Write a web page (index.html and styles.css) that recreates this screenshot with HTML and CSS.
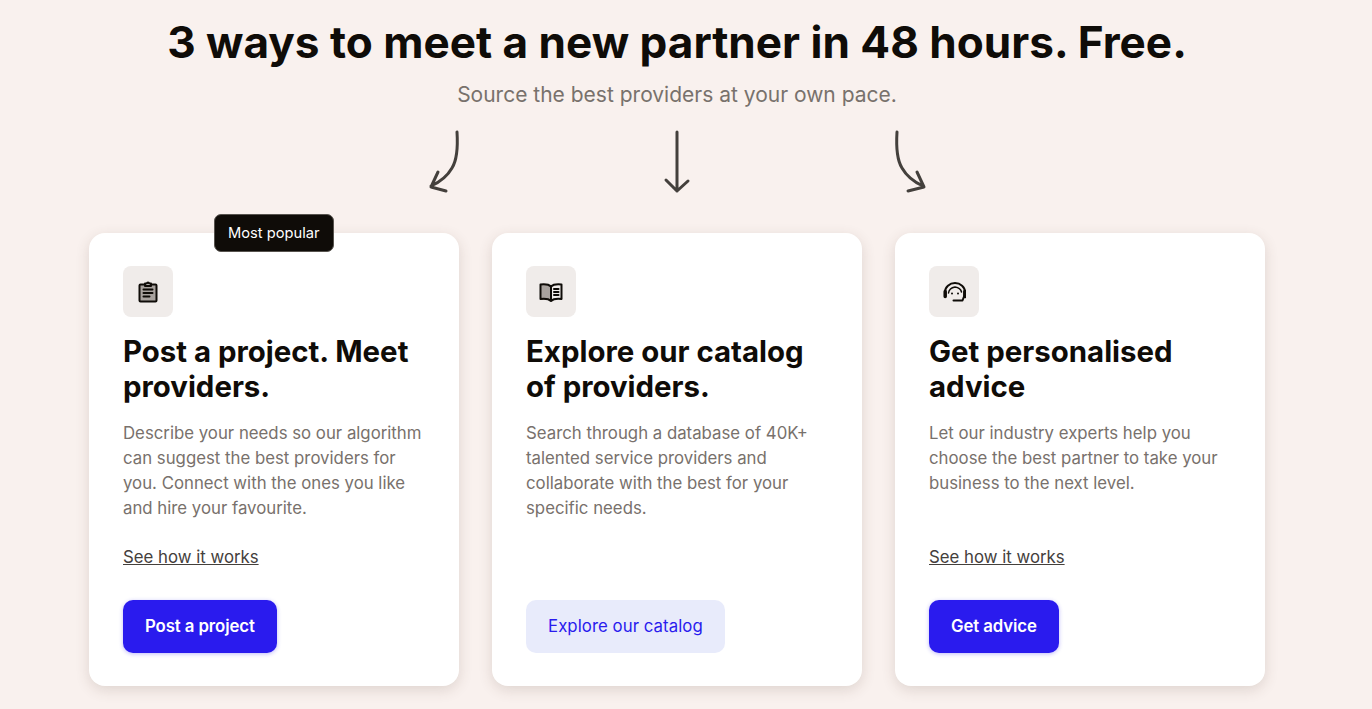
FILE: index.html
```html
<!DOCTYPE html>
<html lang="en">
<head>
    <meta charset="UTF-8">
    <title>3 ways to meet a new partner</title>
    <link rel="stylesheet" href="styles.css">
</head>
<body>
    <header class="intro">
        <h1>3 ways to meet a new partner in 48 hours. Free.</h1>
        <p>Source the best providers at your own pace.</p>
    </header>
    <div class="arrows">
        <svg class="arrow" width="40" height="68" viewBox="0 0 40 68">
            <path d="M32 4C33 20 32 32 27 40C23 47 15 54 6 58M13 44L6 59L21 63"/>
        </svg>
        <svg class="arrow" width="30" height="68" viewBox="0 0 30 68">
            <path d="M15 4V63M4 52L15 63L26 53"/>
        </svg>
        <svg class="arrow" width="40" height="68" viewBox="0 0 40 68">
            <path d="M8 4C7 20 8 32 13 40C17 47 25 54 34 58M28 44L35 59L19 63"/>
        </svg>
    </div>
    <div class="cards">
        <div class="card">
            <span class="badge">Most popular</span>
            <div class="icon">
                <svg width="24" height="24" viewBox="0 0 24 24">
                    <path class="fill" d="M4 5h16v16H4z"/>
                    <path d="M9 4.500H4.500a1 1 0 0 0-1 1v15a1 1 0 0 0 1 1h15a1 1 0 0 0 1-1v-15a1 1 0 0 0-1-1H15M9 3.500h2a1 1 0 0 1 2 0h2v2.500H9zM7.500 9.500h9M7.500 13h9M7.500 16.500h6"/>
                </svg>
            </div>
            <h2>Post a project. Meet providers.</h2>
            <p>Describe your needs so our algorithm can suggest the best providers for you. Connect with the ones you like and hire your favourite.</p>
            <a class="link" href="#">See how it works</a>
            <a class="btn" href="#">Post a project</a>
        </div>
        <div class="card">
            <div class="icon">
                <svg width="24" height="24" viewBox="0 0 24 24">
                    <path class="fill" d="M2 5h10v15H2z"/>
                    <path d="M12 6.500C10 4.500 6 4 1.500 4.500V19c4.500-.5 8.500 0 10.500 2 2-2 6-2.500 10.500-2V4.500C18 4 14 4.500 12 6.500zM12 6.500v14M15 9h4.500M15 12h4.500M15 15h4.500"/>
                </svg>
            </div>
            <h2>Explore our catalog of providers.</h2>
            <p>Search through a database of 40K+ talented service providers and collaborate with the best for your specific needs.</p>
            <a class="btn btn-light" href="#">Explore our catalog</a>
        </div>
        <div class="card">
            <div class="icon">
                <svg width="24" height="24" viewBox="0 0 24 24">
                    <path d="M3 13v-1a10 9 0 0 1 20 0v1"/>
                    <path class="thin" d="M6.500 13C7 9.500 10 7.500 13 7c3 .5 6 2.500 6.500 5"/>
                    <path class="thick" d="M3.200 11.500v5M22.800 11.500v5"/>
                    <path d="M22 16.500l-1.500 4h-9"/>
                    <path d="M10 13.500h.01M16 13.500h.01"/>
                </svg>
            </div>
            <h2>Get personalised advice</h2>
            <p>Let our industry experts help you choose the best partner to take your business to the next level.</p>
            <a class="link" href="#">See how it works</a>
            <a class="btn" href="#">Get advice</a>
        </div>
    </div>
</body>
</html>
```

FILE: styles.css
```css
body {
    font-family: Inter, "Liberation Sans", sans-serif;
    background-color: #f9f1ee;
    color: #0f0c08;
    margin: 0;
    padding: 0 18px 23px 0;
    display: flex;
    flex-direction: column;
    align-items: center;
}
.intro {
    text-align: center;
    padding-top: 14px;
}
h1 {
    font-size: 44.1px;
    line-height: 56px;
    font-weight: 700;
    margin: 0;
}
.intro p {
    font-size: 21px;
    line-height: 30px;
    color: #78716c;
    margin: 10px 0 0;
}
.arrows {
    display: flex;
    justify-content: center;
    gap: 197px;
    margin-top: 18px;
    height: 68px;
}
.arrow {
    fill: none;
    stroke: #44403c;
    stroke-width: 3;
    stroke-linecap: round;
    stroke-linejoin: round;
}
.cards {
    display: flex;
    gap: 33px;
    margin-top: 37px;
}
.card {
    position: relative;
    width: 370px;
    height: 453px;
    box-sizing: border-box;
    background-color: #fff;
    border-radius: 16px;
    padding: 33px 34px;
    box-shadow: 0 4px 14px rgba(90, 60, 50, 0.16);
    display: flex;
    flex-direction: column;
    align-items: flex-start;
}
.badge {
    position: absolute;
    top: -19px;
    left: 125px;
    background-color: #0f0c08;
    color: #fff;
    border: 1px solid #57534e;
    border-radius: 7px;
    font-size: 14.7px;
    line-height: 20px;
    padding: 8px 13px;
}
.icon {
    width: 50px;
    height: 51px;
    background-color: #f0ecea;
    border-radius: 8px;
    display: flex;
    align-items: center;
    justify-content: center;
}
.icon svg {
    fill: none;
    stroke: #0f0c08;
    stroke-width: 2;
    stroke-linecap: round;
    stroke-linejoin: round;
}
.icon .fill {
    fill: #a8a29e;
    stroke: none;
}
.icon .thin {
    stroke-width: 1.5;
}
.icon .thick {
    stroke-width: 3.5;
}
h2 {
    font-size: 29.4px;
    line-height: 35px;
    font-weight: 700;
    margin: 17px 0 0;
}
.card p {
    font-size: 16.8px;
    line-height: 25px;
    color: #78716c;
    margin: 17px 0 0;
    min-height: 100px;
}
.link {
    font-size: 16.8px;
    line-height: 24px;
    color: #44403c;
    margin-top: 24px;
}
.btn {
    margin-top: auto;
    background-color: #2a1bee;
    color: #fff;
    font-size: 16.8px;
    font-weight: 600;
    letter-spacing: -0.1px;
    line-height: 24px;
    padding: 14px 22px 15px;
    border-radius: 10px;
    text-decoration: none;
    box-shadow: 0 1px 4px rgba(42, 27, 238, 0.3);
}
.btn-light {
    background-color: #e8ebfb;
    color: #2a1bee;
    font-weight: 400;
    letter-spacing: 0.05px;
    box-shadow: none;
}
```
